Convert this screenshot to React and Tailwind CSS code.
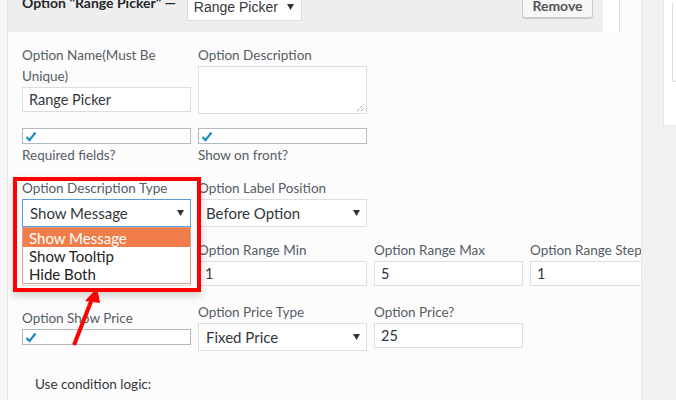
import React from 'react';

const label = "block text-[13.5px] leading-[21px] text-[#555d66] whitespace-nowrap";
const input = "h-[25px] border border-[#dddddd] bg-white px-[6px] flex items-center text-[14.5px] text-[#32373c]";

function Arrow() {
  return (
    <svg width="7" height="6" viewBox="0 0 7 6" className="shrink-0">
      <path d="M0 0 H7 L3.5 6 Z" fill="#333" />
    </svg>
  );
}

function Check() {
  return (
    <div className="h-[16px] border border-[#b4b9be] bg-white flex items-center pl-[2px]">
      <svg width="12" height="11" viewBox="0 0 12 11">
        <path d="M1.5 6 L4.5 9 L10.5 1.5" fill="none" stroke="#1e8cbe" strokeWidth="2.2" />
      </svg>
    </div>
  );
}

function Select({ value, className = "", focus }) {
  return (
    <div
      className={
        "h-[28px] bg-white border flex items-center justify-between pl-[7px] pr-[6px] text-[15px] text-[#32373c] " +
        (focus ? "border-[#5b9dd9] " : "border-[#dddddd] ") +
        className
      }
    >
      <span>{value}</span>
      <Arrow />
    </div>
  );
}

export default function App() {
  return (
    <div className="w-[676px] h-[400px] overflow-hidden flex bg-[#f1f1f1] font-['Lato','Noto_Sans',sans-serif]">
      <div className="w-[8px] shrink-0 bg-[#f7f7f7] border-r border-[#e4e4e4]" />

      <div className="w-[634px] shrink-0 relative overflow-hidden flex flex-col bg-[#fcfcfc] border-r border-[#e8e8e8]">
        {/* header */}
        <div className="h-[32px] flex shrink-0">
          <div className="w-[595px] bg-[#eeeeee] flex items-start pl-[14px]">
            <span className="mt-[-7px] text-[14px] leading-[20px] font-bold text-[#23282d]">
              Option "Range Picker" —
            </span>
            <div className="ml-[11px] mt-[-7px] w-[115px] h-[28px] bg-white border border-[#dddddd] flex items-center justify-between pl-[6px] pr-[7px] font-['Liberation_Sans',sans-serif] text-[14px] text-[#32373c]">
              <span>Range Picker</span>
              <Arrow />
            </div>
            <div className="ml-auto mr-[10px] mt-[-8px] w-[71px] h-[26px] rounded-[3px] bg-[#f7f7f7] border border-[#cccccc] shadow-[0_1px_0_#cccccc] flex items-center justify-center text-[14px] font-bold text-[#555555]">
              Remove
            </div>
          </div>
          <div className="w-[17px] bg-white border-r border-[#dddddd]" />
        </div>

        {/* body */}
        <div className="pl-[14px] pt-[13px]">
          <div className="flex gap-[7px] items-start">
            <div className="w-[169px] shrink-0">
              <span className={label}>Option Name(Must Be<br />Unique)</span>
              <div className={input}>Range Picker</div>
            </div>
            <div className="w-[169px] shrink-0">
              <span className={label}>Option Description</span>
              <div className="h-[48px] bg-white border border-[#dddddd] relative">
                <svg width="9" height="9" viewBox="0 0 9 9" className="absolute right-[1px] bottom-[1px]">
                  <path d="M1 8 L8 1 M5 8 L8 5" stroke="#777" strokeWidth="1" strokeDasharray="1 1" />
                </svg>
              </div>
            </div>
          </div>

          <div className="flex gap-[7px] items-start mt-[14px]">
            <div className="w-[169px] shrink-0">
              <Check />
              <span className={label + " mt-[1px]"}>Required fields?</span>
            </div>
            <div className="w-[169px] shrink-0">
              <Check />
              <span className={label + " mt-[1px]"}>Show on front?</span>
            </div>
          </div>

          <div className="flex gap-[7px] items-start mt-[12px]">
            <div className="w-[169px] shrink-0 relative z-10">
              <span className={label}>Option Description Type</span>
              <Select value="Show Message" focus />
              <div className="absolute left-0 right-0 top-full bg-white border border-[#d9a18b] text-[15px] leading-[18px] text-[#222]">
                <div className="bg-[#f07d4a] text-white px-[6px] h-[19px] flex items-center">Show Message</div>
                <div className="px-[6px]">Show Tooltip</div>
                <div className="px-[6px]">Hide Both</div>
              </div>
            </div>
            <div className="w-[169px] shrink-0">
              <span className={label}>Option Label Position</span>
              <Select value="Before Option" />
            </div>
          </div>

          <div className="flex gap-[7px] items-start mt-[13px]">
            <div className="w-[169px] shrink-0 pt-[21px]">
              <div className={input}></div>
            </div>
            <div className="w-[169px] shrink-0">
              <span className={label}>Option Range Min</span>
              <div className={input}>1</div>
            </div>
            <div className="w-[149px] shrink-0">
              <span className={label}>Option Range Max</span>
              <div className={input}>5</div>
            </div>
            <div className="w-[149px] shrink-0">
              <span className={label}>Option Range Step</span>
              <div className={input}>1</div>
            </div>
          </div>

          <div className="flex gap-[7px] items-start mt-[16px]">
            <div className="w-[169px] shrink-0 mt-[6px]">
              <span className={label}>Option Show Price</span>
              <Check />
            </div>
            <div className="w-[169px] shrink-0">
              <span className={label}>Option Price Type</span>
              <Select value="Fixed Price" className="h-[27px]" />
            </div>
            <div className="w-[149px] shrink-0">
              <span className={label}>Option Price?</span>
              <div className={input}>25</div>
            </div>
          </div>

          <div className="mt-[23px] pl-[13px] text-[13.5px] leading-[20px] text-[#32373c]">
            Use condition logic:
          </div>
        </div>

        {/* annotation */}
        <div className="absolute left-[5px] top-[177px] w-[188px] h-[115px] border-4 border-[#ff0000] z-20 shadow-[0_4px_8px_rgba(0,0,0,0.18)]" />
        <svg width="60" height="70" viewBox="0 0 60 70" className="absolute left-[55px] top-[285px] z-20">
          <path d="M11 60 L29 14" stroke="#ff0000" strokeWidth="4" />
          <path d="M34 3 L22 16 L37 18 Z" fill="#ff0000" />
        </svg>
      </div>

      <div className="flex-1 pl-[21px]">
        <div className="h-[126px] bg-white border-l border-b border-[#e5e5e5] pl-[8px] pt-[3px]">
          <div className="h-[79px] border-l border-b border-[#dddddd] rounded-bl-[3px]" />
        </div>
      </div>
    </div>
  );
}
